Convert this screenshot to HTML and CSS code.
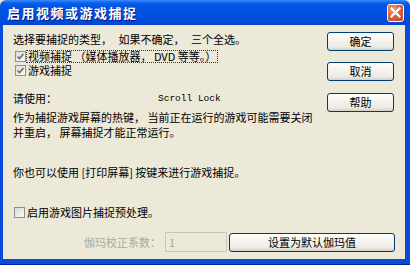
FILE: index.html
```html
<!DOCTYPE html>
<html lang="zh-CN">
<head>
<meta charset="utf-8">
<title>启用视频或游戏捕捉</title>
<link rel="stylesheet" href="styles.css">
</head>
<body>
<div class="window">
  <div class="titlebar">
    <span class="title">启用视频或游戏捕捉</span>
    <div class="close">
      <svg width="11" height="11" viewBox="0 0 11 11"><path d="M1.5 1.5 L9.5 9.5 M9.5 1.5 L1.5 9.5" stroke="#fff" stroke-width="2.2" stroke-linecap="square"/></svg>
    </div>
  </div>
  <div class="frame">
    <div class="client">
      <div class="top">
        <div class="left">
          <div class="sel">选择要捕捉的类型， 如果不确定， 三个全选。</div>
          <div class="cb cb1"><span class="box checked"><svg width="9" height="9" viewBox="0 0 9 9"><path d="M1.5 4.5 L3.5 6.5 L7.5 2" stroke="#6b6b6b" stroke-width="1.6" fill="none"/></svg></span><span class="focus">视频捕捉 （媒体播放器， DVD 等等。）</span></div>
          <div class="cb cb2"><span class="box checked"><svg width="9" height="9" viewBox="0 0 9 9"><path d="M1.5 4.5 L3.5 6.5 L7.5 2" stroke="#6b6b6b" stroke-width="1.6" fill="none"/></svg></span><span class="lbl">游戏捕捉</span></div>
          <div class="use"><span class="use-lbl">请使用：</span><span class="key">Scroll Lock</span></div>
          <div class="para"><div>作为捕捉游戏屏幕的热键， 当前正在运行的游戏可能需要关闭</div><div>并重启， 屏幕捕捉才能正常运行。</div></div>
        </div>
        <div class="right">
          <div class="btn b-ok">确定</div>
          <div class="btn b-cancel">取消</div>
          <div class="btn b-help">帮助</div>
        </div>
      </div>
      <div class="alt">你也可以使用 [打印屏幕] 按键来进行游戏捕捉。</div>
      <div class="cb cb3"><span class="box"></span><span class="lbl">启用游戏图片捕捉预处理。</span></div>
      <div class="gamma">
        <span class="glbl">伽玛校正系数：</span>
        <div class="ginput">1</div>
        <div class="btn gbtn">设置为默认伽玛值</div>
      </div>
    </div>
  </div>
</div>
</body>
</html>
```
FILE: styles.css
```css
html, body {
  margin: 0;
  padding: 0;
  background: #ECE9D8;
}
body {
  font-family: "Noto Sans CJK SC", "Liberation Sans", sans-serif;
  font-size: 11px;
  color: #000;
}
.window {
  width: 410px;
  height: 265px;
  display: flex;
  flex-direction: column;
  overflow: hidden;
}
.titlebar {
  height: 25px;
  flex: none;
  display: flex;
  align-items: center;
  justify-content: space-between;
  background: linear-gradient(#3a8cff 0px, #0a5fea 3px, #0055e5 6px, #0050e0 16px, #0049d6 22px, #0845d0 25px);
  border-radius: 6px 6px 0 0;
}
.title {
  color: #fff;
  font-weight: bold;
  font-size: 13px;
  letter-spacing: 1.5px;
  padding-left: 7px;
  text-shadow: 1px 1px 0 #0a1a80;
  line-height: 25px;
}
.close {
  width: 17px;
  height: 18px;
  margin-right: 6px;
  box-sizing: border-box;
  border: 1px solid #fff;
  border-radius: 3px;
  background: radial-gradient(circle at 35% 30%, #f0a080 0%, #e2603a 45%, #c8401c 100%);
  display: flex;
  align-items: center;
  justify-content: center;
}
.frame {
  flex: 1;
  display: flex;
  background: #0a4ad8;
  padding: 0 5px 5px 3px;
  border-bottom: 1px solid #00229a;
  box-sizing: border-box;
}
.client {
  flex: 1;
  background: #ECE9D8;
  padding: 0 10px 0 10px;
  display: flex;
  flex-direction: column;
}
.top {
  display: flex;
}
.left {
  flex: 1;
}
.right {
  width: 67px;
  padding-top: 7px;
  display: flex;
  flex-direction: column;
  margin-right: 1px;
}
.sel {
  margin-top: 8px;
  line-height: 13px;
  height: 13px;
  white-space: nowrap;
  word-spacing: 4px;
}
.cb {
  display: flex;
  align-items: center;
  height: 14px;
  white-space: nowrap;
}
.cb1 { margin-top: 3px; margin-left: 2px; }
.cb2 { margin-left: 2px; }
.box {
  width: 11px;
  height: 11px;
  box-sizing: border-box;
  border: 1px solid #8e8f8f;
  background: linear-gradient(135deg, #dcdcd4, #fafaf8);
  display: flex;
  align-items: center;
  justify-content: center;
  flex: none;
}
.focus {
  margin-left: 1px;
  padding: 0 1px 0 1px;
  outline: 1px dotted #333;
  line-height: 11px;
}
.lbl {
  margin-left: 2px;
}
.use {
  margin-top: 15px;
  height: 13px;
  line-height: 13px;
  display: flex;
}
.use-lbl {
  width: 145px;
}
.key {
  font-family: "Liberation Mono", monospace;
  font-size: 9.5px;
}
.para {
  margin-top: 5px;
  line-height: 15px;
  white-space: nowrap;
}
.btn {
  height: 19px;
  box-sizing: border-box;
  border: 1px solid #003c74;
  border-radius: 3px;
  background: linear-gradient(#ffffff 0%, #f4f3ee 40%, #ecebe5 80%, #d6d0c5 100%);
  display: flex;
  align-items: center;
  justify-content: center;
  line-height: 1;
}
.b-cancel { margin-top: 11px; }
.b-help { margin-top: 12px; }
.alt {
  margin-top: 26px;
  line-height: 13px;
  white-space: nowrap;
}
.cb3 {
  margin-top: 26px;
  margin-left: 1px;
}
.gamma {
  margin-top: 13px;
  display: flex;
  align-items: center;
  justify-content: flex-end;
}
.glbl {
  color: #aca899;
  margin-right: 4px;
}
.ginput {
  width: 62px;
  height: 20px;
  box-sizing: border-box;
  border: 1px solid #c9c7ba;
  color: #aca899;
  padding-left: 3px;
  line-height: 18px;
  margin-right: 2px;
}
.gbtn {
  width: 166px;
}
```
